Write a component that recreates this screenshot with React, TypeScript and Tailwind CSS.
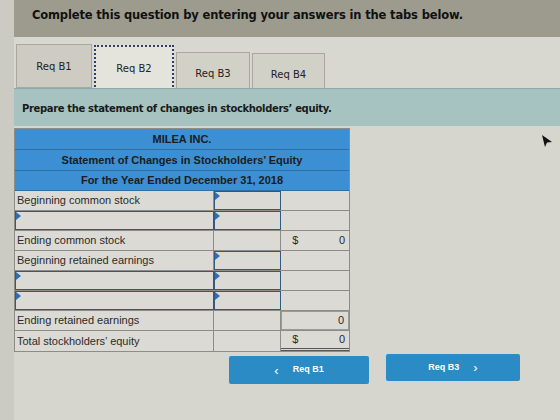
import React from "react";

const sans = { fontFamily: '"Liberation Sans", Arial, sans-serif' };
const verdana = { fontFamily: '"DejaVu Sans", Verdana, sans-serif' };

function InputMark() {
  return (
    <span className="absolute left-0 top-0 w-0 h-0 border-t-[4px] border-t-transparent border-b-[4px] border-b-transparent border-l-[5px] border-l-[#2c6fb8]" />
  );
}

function LabelCell({ text, input }: { text?: string; input?: boolean }) {
  return (
    <div
      className={
        "relative w-[200px] h-full flex items-center pl-[2px] text-[11px] text-[#2a2a2a] " +
        (input ? "border-[1.5px] border-[#2e5a86]" : "border-r border-[#8c8c88]")
      }
    >
      {input && <InputMark />}
      {text}
    </div>
  );
}

function AmountCell({ input }: { input?: boolean }) {
  return (
    <div
      className={
        "relative w-[67px] h-full " +
        (input ? "border-[1.5px] border-[#2e5a86]" : "border-r border-[#8c8c88]")
      }
    >
      {input && <InputMark />}
    </div>
  );
}

function TotalCell({ dollar, value, boxed, underline }: { dollar?: boolean; value?: string; boxed?: boolean; underline?: boolean }) {
  return (
    <div className="w-[68px] h-full flex items-center">
      <div
        className={
          "flex-1 h-full flex items-center justify-between pl-[11px] pr-[4px] text-[11px] text-[#2a2a2a] " +
          (boxed ? "border border-[#9a9a96] " : "") +
          (underline ? "border-b-[3px] border-double border-b-[#555]" : "")
        }
      >
        <span>{dollar ? "$" : ""}</span>
        <span>{value}</span>
      </div>
    </div>
  );
}

function Row({ children, last }: { children: React.ReactNode; last?: boolean }) {
  return (
    <div className={"flex h-[20px] " + (last ? "" : "border-b border-[#8c8c88]")}>{children}</div>
  );
}

export default function App() {
  return (
    <div className="relative w-[560px] h-[420px] overflow-hidden flex bg-[#d6d5ce]" style={sans}>
      <div className="w-[14px] bg-[#cbcac3]" />
      <div className="flex-1 flex flex-col">
        {/* instruction header */}
        <div className="h-[37px] bg-[#9c9b8d] pl-[18px] pt-[2px]">
          <span className="text-[11.5px] font-bold text-[#111] tracking-[-0.15px]" style={verdana}>
            Complete this question by entering your answers in the tabs below.
          </span>
        </div>

        {/* tabs */}
        <div className="h-[51px] flex items-end pl-[2px] gap-[2px] bg-[#d8d7d0]">
          <div className="w-[76px] h-[44px] bg-[#cdcbc2] border border-[#a9a79f] flex items-center justify-center text-[10px] text-[#222]" style={verdana}>
            Req B1
          </div>
          <div className="w-[80px] h-[46px] -mb-[3px] bg-[#e4e3dc] border-2 border-dotted border-[#2d3f66] flex items-center justify-center text-[10px] text-[#222]" style={verdana}>
            Req B2
          </div>
          <div className="w-[74px] h-[42px] -mb-[6px] bg-[#d2d1c8] border border-[#a9a79f] flex items-center justify-center text-[10px] text-[#222]" style={verdana}>
            Req B3
          </div>
          <div className="w-[73px] h-[42px] -mb-[7px] bg-[#d2d1c8] border border-[#a9a79f] flex items-center justify-center text-[10px] text-[#222]" style={verdana}>
            Req B4
          </div>
        </div>

        {/* prompt band */}
        <div className="h-[38px] bg-[#a7c3c1] border-t border-[#8ea9a7] flex items-center pl-[8px] pt-[2px]">
          <span className="text-[10px] text-[#1a1a1a] font-semibold tracking-[-0.35px]" style={verdana}>
            Prepare the statement of changes in stockholders’ equity.
          </span>
        </div>

        {/* statement table */}
        <div className="mt-[2px] w-[336px] border border-[#8c8c88] bg-[#dcdad4]">
          <div className="bg-[#3b8fd2] text-[11px] font-bold text-[#1c1c1c]">
            <div className="h-[21px] flex items-center justify-center border-b border-[#2e6fa6]">MILEA INC.</div>
            <div className="h-[21px] flex items-center justify-center border-b border-[#2e6fa6]">
              Statement of Changes in Stockholders’ Equity
            </div>
            <div className="h-[20px] flex items-center justify-center border-b border-[#2e6fa6]">
              For the Year Ended December 31, 2018
            </div>
          </div>
          <Row>
            <LabelCell text="Beginning common stock" />
            <AmountCell input />
            <TotalCell />
          </Row>
          <Row>
            <LabelCell input />
            <AmountCell input />
            <TotalCell />
          </Row>
          <Row>
            <LabelCell text="Ending common stock" />
            <AmountCell />
            <TotalCell dollar value="0" />
          </Row>
          <Row>
            <LabelCell text="Beginning retained earnings" />
            <AmountCell input />
            <TotalCell />
          </Row>
          <Row>
            <LabelCell input />
            <AmountCell input />
            <TotalCell />
          </Row>
          <Row>
            <LabelCell input />
            <AmountCell input />
            <TotalCell />
          </Row>
          <Row>
            <LabelCell text="Ending retained earnings" />
            <AmountCell />
            <TotalCell value="0" boxed />
          </Row>
          <Row last>
            <LabelCell text="Total stockholders’ equity" />
            <AmountCell />
            <TotalCell dollar value="0" underline />
          </Row>
        </div>

        {/* navigation */}
        <div className="flex items-start pl-[215px] gap-[17px] mt-[2px]">
          <button className="w-[140px] h-[28px] mt-[2px] rounded-[2px] bg-[#2a8bc5] text-white text-[9px] font-bold flex items-center justify-center gap-[14px]">
            <span className="text-[13px] font-normal leading-none">‹</span>
            <span>Req B1</span>
          </button>
          <button className="w-[134px] h-[27px] rounded-[2px] bg-[#2a8bc5] text-white text-[9px] font-bold flex items-center justify-center gap-[14px]">
            <span>Req B3</span>
            <span className="text-[13px] font-normal leading-none">›</span>
          </button>
        </div>
      </div>

      {/* mouse pointer */}
      <svg className="absolute left-[540px] top-[134px]" width="14" height="14" viewBox="0 0 14 14">
        <path d="M2 1 L12 8 L7 8.5 L5 13 Z" fill="#111" />
      </svg>
    </div>
  );
}
